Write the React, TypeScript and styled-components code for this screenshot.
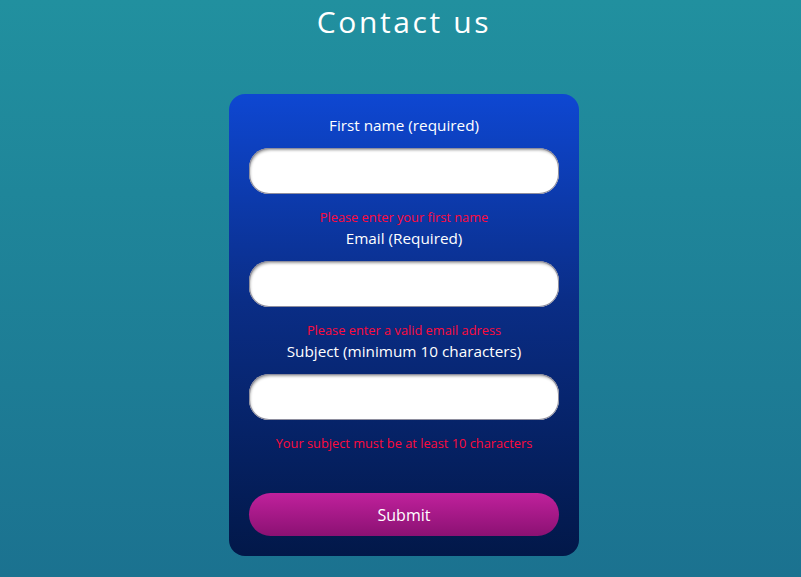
import React from "react";
import styled, { createGlobalStyle } from "styled-components";

const Global = createGlobalStyle`
  html, body { margin: 0; padding: 0; }
  body {
    min-height: 577px;
    background: linear-gradient(180deg, #21909f 0%, #1b7290 100%);
    font-family: "Open Sans", "Noto Sans", sans-serif;
  }
`;

const Page = styled.main`
  display: flex;
  flex-direction: column;
  align-items: center;
  min-height: 577px;
  padding-left: 7px;
  box-sizing: border-box;
`;

const Title = styled.h1`
  margin: 0;
  padding-top: 4px;
  height: 94px;
  box-sizing: border-box;
  color: #ffffff;
  font-weight: 400;
  font-size: 30px;
  line-height: 36px;
  letter-spacing: 2.6px;
`;

const Card = styled.form`
  width: 350px;
  box-sizing: border-box;
  padding: 20px 20px 20px;
  border-radius: 16px;
  background: linear-gradient(180deg, #0e47d2 0%, #0a2d86 45%, #021849 100%);
  display: flex;
  flex-direction: column;
  align-items: stretch;
`;

const Label = styled.label`
  display: block;
  text-align: center;
  color: #ffffff;
  font-size: 15.3px;
  line-height: 22px;
  height: 22px;
  margin-bottom: 12px;
`;

const Input = styled.input`
  display: block;
  width: 310px;
  height: 46px;
  box-sizing: border-box;
  border: none;
  border-radius: 20px;
  background: #ffffff;
  box-shadow: inset 0 0 0 1px #8e8e9e, inset 1px 2px 3px rgba(0, 0, 0, 0.4);
  outline: none;
`;

const ErrorText = styled.p<{ $gap?: number }>`
  margin: 15px 0 ${(p) => p.$gap ?? 2}px;
  text-align: center;
  color: #ff0a3c;
  font-size: 12.8px;
  line-height: 16px;
  height: 16px;
`;

const Submit = styled.button`
  width: 310px;
  height: 43px;
  border: none;
  border-radius: 22px;
  background: linear-gradient(180deg, #c0219c 0%, #8b1173 100%);
  color: #ffffff;
  font-family: "Open Sans", "Noto Sans", sans-serif;
  font-size: 16px;
  cursor: pointer;
`;

const fields = [
  { label: "First name (required)", error: "Please enter your first name" },
  { label: "Email (Required)", error: "Please enter a valid email adress" },
  { label: "Subject (minimum 10 characters)", error: "Your subject must be at least 10 characters" },
];

export default function App() {
  return (
    <>
      <Global />
      <Page>
        <Title>Contact us</Title>
        <Card onSubmit={(e) => e.preventDefault()}>
          {fields.map((f, i) => (
            <React.Fragment key={f.label}>
              <Label>{f.label}</Label>
              <Input type="text" />
              <ErrorText $gap={i === fields.length - 1 ? 42 : 2}>{f.error}</ErrorText>
            </React.Fragment>
          ))}
          <Submit type="submit">Submit</Submit>
        </Card>
      </Page>
    </>
  );
}
